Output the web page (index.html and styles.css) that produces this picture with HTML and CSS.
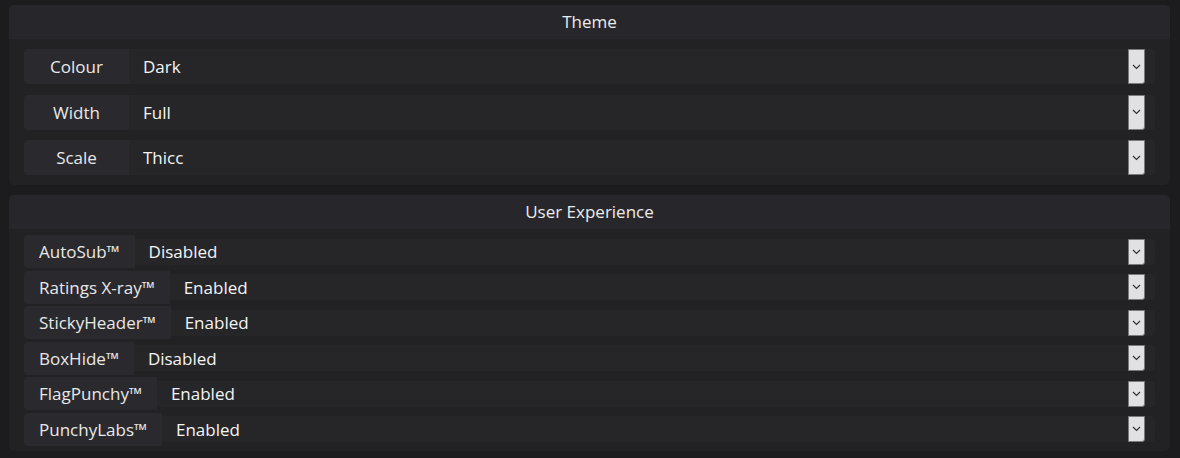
FILE: index.html
```html
<!DOCTYPE html>
<html lang="en">
<head>
    <meta charset="UTF-8">
    <meta name="viewport" content="width=device-width, initial-scale=1.0">
    <title>Settings</title>
    <link rel="stylesheet" href="styles.css">
</head>
<body>
    <div class="panel">
        <div class="panel-header">Theme</div>
        <div class="panel-body theme-body">
            <div class="field">
                <span class="field-label fixed">Colour</span>
                <div class="select">Dark<span class="select-btn"><svg width="9" height="6" viewBox="0 0 9 6"><path d="M1 1l3.5 3.5L8 1" fill="none" stroke="#333" stroke-width="1.2"/></svg></span></div>
            </div>
            <div class="field">
                <span class="field-label fixed">Width</span>
                <div class="select">Full<span class="select-btn"><svg width="9" height="6" viewBox="0 0 9 6"><path d="M1 1l3.5 3.5L8 1" fill="none" stroke="#333" stroke-width="1.2"/></svg></span></div>
            </div>
            <div class="field">
                <span class="field-label fixed">Scale</span>
                <div class="select">Thicc<span class="select-btn"><svg width="9" height="6" viewBox="0 0 9 6"><path d="M1 1l3.5 3.5L8 1" fill="none" stroke="#333" stroke-width="1.2"/></svg></span></div>
            </div>
        </div>
    </div>

    <div class="panel">
        <div class="panel-header">User Experience</div>
        <div class="panel-body ux-body">
            <div class="field compact">
                <span class="field-label">AutoSub™</span>
                <div class="select">Disabled<span class="select-btn"><svg width="9" height="6" viewBox="0 0 9 6"><path d="M1 1l3.5 3.5L8 1" fill="none" stroke="#333" stroke-width="1.2"/></svg></span></div>
            </div>
            <div class="field compact">
                <span class="field-label">Ratings X-ray™</span>
                <div class="select">Enabled<span class="select-btn"><svg width="9" height="6" viewBox="0 0 9 6"><path d="M1 1l3.5 3.5L8 1" fill="none" stroke="#333" stroke-width="1.2"/></svg></span></div>
            </div>
            <div class="field compact">
                <span class="field-label">StickyHeader™</span>
                <div class="select">Enabled<span class="select-btn"><svg width="9" height="6" viewBox="0 0 9 6"><path d="M1 1l3.5 3.5L8 1" fill="none" stroke="#333" stroke-width="1.2"/></svg></span></div>
            </div>
            <div class="field compact">
                <span class="field-label">BoxHide™</span>
                <div class="select">Disabled<span class="select-btn"><svg width="9" height="6" viewBox="0 0 9 6"><path d="M1 1l3.5 3.5L8 1" fill="none" stroke="#333" stroke-width="1.2"/></svg></span></div>
            </div>
            <div class="field compact">
                <span class="field-label">FlagPunchy™</span>
                <div class="select">Enabled<span class="select-btn"><svg width="9" height="6" viewBox="0 0 9 6"><path d="M1 1l3.5 3.5L8 1" fill="none" stroke="#333" stroke-width="1.2"/></svg></span></div>
            </div>
            <div class="field compact">
                <span class="field-label">PunchyLabs™</span>
                <div class="select">Enabled<span class="select-btn"><svg width="9" height="6" viewBox="0 0 9 6"><path d="M1 1l3.5 3.5L8 1" fill="none" stroke="#333" stroke-width="1.2"/></svg></span></div>
            </div>
        </div>
    </div>
</body>
</html>
```

FILE: styles.css
```css
/* Reset default browser styles */
* {
    box-sizing: border-box;
    margin: 0;
    padding: 0;
}

/* Body styles */
body {
    font-family: "Open Sans", "Noto Sans", sans-serif;
    font-size: 17px;
    color: #ececec;
    background-color: #1c1c1f;
    padding: 5px 10px 0 9px;
}

/* Panel styles */
.panel {
    background-color: #222225;
    border-radius: 5px;
    margin-bottom: 10px;
    overflow: hidden;
}

.panel-header {
    height: 34px;
    line-height: 34px;
    text-align: center;
    background-color: #27272b;
    color: #ececec;
}

.panel-body {
    display: flex;
    flex-direction: column;
    padding: 0 15px;
}

.theme-body {
    gap: 10.5px;
    padding-top: 10px;
    padding-bottom: 10px;
}

.ux-body {
    gap: 2.6px;
    padding-top: 6px;
    padding-bottom: 5px;
}

/* Field row styles */
.field {
    display: flex;
    align-items: stretch;
    height: 35px;
}

.field.compact {
    align-items: center;
    height: 33px;
}

.field-label {
    display: flex;
    align-items: center;
    padding: 0 15px;
    background-color: #2a2a2e;
    border-radius: 4px 0 0 4px;
    white-space: nowrap;
    color: #e8e8e8;
}

.field-label.fixed {
    width: 105px;
    justify-content: center;
    padding: 0;
}

.field.compact .field-label {
    height: 33px;
}

.select {
    flex: 1;
    display: flex;
    align-items: center;
    padding-left: 14px;
    padding-right: 10px;
    background-color: #262629;
    border-radius: 0 4px 4px 0;
    color: #f4f4f4;
}

.field.compact .select {
    height: 26px;
}

.select-btn {
    margin-left: auto;
    width: 17px;
    height: 100%;
    display: flex;
    align-items: center;
    justify-content: center;
    background-color: #e1e1e1;
    border: 1px solid #7a7a7a;
    border-radius: 0 0 3px 0;
}
```
